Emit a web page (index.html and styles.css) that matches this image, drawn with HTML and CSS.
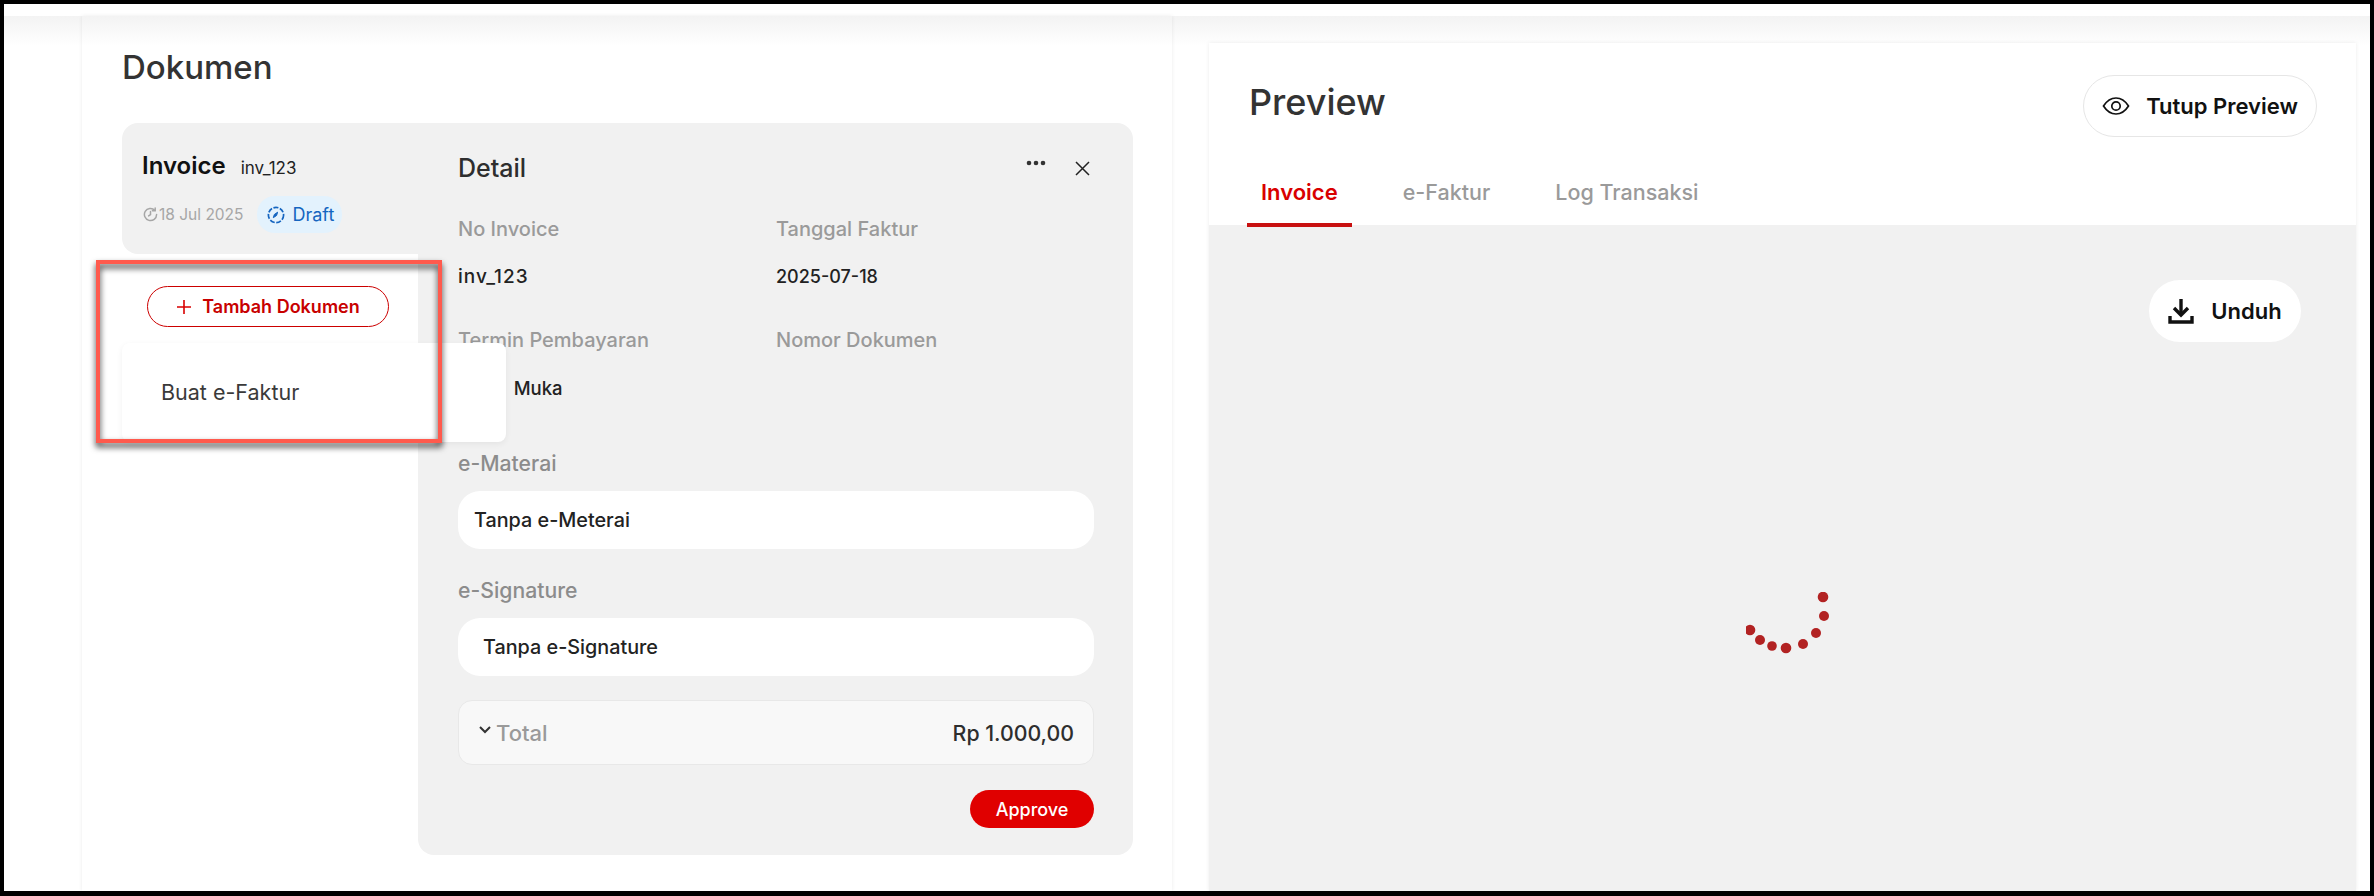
FILE: index.html
```html
<!DOCTYPE html>
<html>
    <head>
        <link rel="stylesheet" href="styles.css">
    </head>
<body>
<div class="page">
    <section class="doc-panel">
        <h1 class="panel-title">Dokumen</h1>
        <div class="doc-layout">
            <div class="sidebar">
                <div class="doc-card">
                    <div class="doc-card-top">
                        <span class="doc-name">Invoice</span>
                        <span class="doc-no">inv_123</span>
                    </div>
                    <div class="doc-card-meta">
                        <svg class="clock" width="15" height="15" viewBox="0 0 16 16" fill="none" stroke="#a6a6a6" stroke-width="1.6" stroke-linecap="round"><path d="M14.5 8A6.5 6.5 0 1 1 12.6 3.4"/><path d="M13 1v3h-3"/><path d="M8 4.8V8l-2 1.5"/></svg>
                        <span class="doc-date">18 Jul 2025</span>
                        <span class="status">
                            <svg width="18" height="18" viewBox="0 0 18 18" fill="none" stroke="#1565c0" stroke-width="1.7"><circle cx="9" cy="9" r="7.6" stroke-dasharray="5 1.6"/><path d="M6.3 11.7l1-3.2 3.3-2.3-1 3.3z" fill="#1565c0" stroke-width="1"/></svg>
                            Draft
                        </span>
                    </div>
                </div>
                <button class="add-doc">
                    <svg width="16" height="16" viewBox="0 0 16 16" stroke="#d90000" stroke-width="1.6"><path d="M8 1v14M1 8h14"/></svg>
                    Tambah Dokumen
                </button>
                <div class="add-menu">Buat e-Faktur</div>
                <div class="callout"></div>
            </div>
            <div class="detail">
                <div class="detail-head">
                    <h2 class="detail-title">Detail</h2>
                    <div class="detail-actions">
                        <svg class="more" width="20" height="6" viewBox="0 0 20 6" fill="#333"><circle cx="3" cy="3" r="2.3"/><circle cx="10" cy="3" r="2.3"/><circle cx="17" cy="3" r="2.3"/></svg>
                        <svg width="15" height="15" viewBox="0 0 15 15" stroke="#222" stroke-width="1.5"><path d="M1 1l13 13M14 1L1 14"/></svg>
                    </div>
                </div>
                <div class="fields">
                    <div>
                        <div class="label">No Invoice</div>
                        <div class="value value-no">inv_123</div>
                    </div>
                    <div>
                        <div class="label">Tanggal Faktur</div>
                        <div class="value">2025-07-18</div>
                    </div>
                    <div>
                        <div class="label">Termin Pembayaran</div>
                        <div class="value value-term">Uang Muka</div>
                    </div>
                    <div>
                        <div class="label">Nomor Dokumen</div>
                    </div>
                </div>
                <div class="label label-materai">e-Materai</div>
                <div class="select">Tanpa e-Meterai</div>
                <div class="label label-sign">e-Signature</div>
                <div class="select select-sign">Tanpa e-Signature</div>
                <div class="total">
                    <div class="total-name">
                        <svg width="12" height="8" viewBox="0 0 12 8" fill="none" stroke="#333" stroke-width="2"><path d="M1 1l5 5 5-5"/></svg>
                        <span>Total</span>
                    </div>
                    <span class="total-value">Rp 1.000,00</span>
                </div>
                <div class="detail-foot">
                    <button class="approve">Approve</button>
                </div>
            </div>
        </div>
    </section>
    <section class="preview-panel">
        <div class="preview-head">
            <h1 class="preview-title">Preview</h1>
            <button class="close-preview">
                <svg width="28" height="20" viewBox="0 0 28 20" fill="none" stroke="#111" stroke-width="1.7"><path d="M1.5 10C5 4.5 9 2 14 2s9 2.5 12.500 8C23 15.500 19 18 14 18S5 15.500 1.500 10z"/><circle cx="14" cy="10" r="4.200"/></svg>
                Tutup Preview
            </button>
        </div>
        <div class="tabs">
            <div class="tab active">Invoice</div>
            <div class="tab">e-Faktur</div>
            <div class="tab">Log Transaksi</div>
        </div>
        <div class="preview-body">
            <button class="download">
                <svg width="26" height="26" viewBox="0 0 26 26" fill="none" stroke="#111" stroke-width="3.4"><path d="M13 1v15"/><path d="M6 10l7 7 7-7"/><path d="M2 18v6h22v-6"/></svg>
                Unduh
            </button>
            <svg class="spinner" width="90" height="64" viewBox="1745 590 90 64" fill="#b22222">
                <circle cx="1822" cy="595" r="5.300"/>
                <circle cx="1823" cy="614" r="5"/>
                <circle cx="1815" cy="631" r="5"/>
                <circle cx="1802" cy="642" r="5"/>
                <circle cx="1785" cy="646" r="5.300"/>
                <circle cx="1771" cy="644" r="4.800"/>
                <circle cx="1759" cy="638" r="5"/>
                <circle cx="1749" cy="628" r="5.300"/>
            </svg>
        </div>
    </section>
</div>
</body>
</html>
```

FILE: styles.css
```css
:root {
    --red: #d90000;
    --panel-grey: #f1f1f1;
    --muted: #9a9a9a;
    --ink: #2e2e2e;
}

html, body {
    margin: 0;
    height: 100%;
}

body {
    box-sizing: border-box;
    height: 896px;
    border: 4px solid #000;
    border-bottom-width: 5px;
    background: #fff;
    color: var(--ink);
    font-family: 'Inter', sans-serif;
    overflow: hidden;
}

h1, h2 {
    margin: 0;
}

button {
    font-family: inherit;
    cursor: pointer;
}

.page {
    display: flex;
    height: 100%;
    padding-top: 12px;
    box-sizing: border-box;
    background: linear-gradient(#f3f3f3, #fff) no-repeat 0 12px / 100% 30px;
}

/* Left panel */
.doc-panel {
    width: 1090px;
    margin-left: 78px;
    padding-left: 40px;
    box-sizing: border-box;
    background: linear-gradient(#f3f3f3, #fff 30px);
    box-shadow: 0 0 4px rgba(0, 0, 0, 0.08);
}

.panel-title {
    margin-top: 31px;
    font-size: 33px;
    line-height: 40px;
    font-weight: 500;
    color: #333;
}

.doc-layout {
    display: flex;
    margin-top: 36px;
}

.sidebar {
    position: relative;
    width: 296px;
}

.doc-card {
    height: 131px;
    padding: 29px 0 0 20px;
    box-sizing: border-box;
    background: var(--panel-grey);
    border-radius: 16px 0 0 16px;
}

.doc-card-top {
    display: flex;
    align-items: baseline;
    gap: 15px;
}

.doc-name {
    font-size: 24px;
    line-height: 28px;
    font-weight: 600;
    color: #111;
}

.doc-no {
    font-size: 17px;
    color: #222;
}

.doc-card-meta {
    display: flex;
    align-items: center;
    margin-top: 16px;
    padding-left: 1px;
}

.clock {
    margin-right: 1px;
}

.doc-date {
    font-size: 15.500px;
    color: #a6a6a6;
}

.status {
    display: flex;
    align-items: center;
    gap: 8px;
    height: 37px;
    margin-left: 13px;
    padding: 0 8px 0 10px;
    background: #e3f2fd;
    border-radius: 18px;
    color: #1565c0;
    font-size: 18px;
}

.add-doc {
    display: flex;
    align-items: center;
    justify-content: center;
    gap: 10px;
    width: 242px;
    height: 41px;
    margin: 32px 0 0 25px;
    padding: 0;
    background: #fff;
    border: 1px solid #c00;
    border-radius: 21px;
    color: #c80000;
    font-size: 18px;
    font-weight: 600;
}

.add-menu {
    position: absolute;
    left: 0;
    top: 220px;
    z-index: 2;
    width: 384px;
    height: 99px;
    padding-left: 39px;
    box-sizing: border-box;
    background: #fff;
    border-radius: 8px;
    box-shadow: 0 2px 6px rgba(0, 0, 0, 0.06);
    font-size: 21.500px;
    line-height: 98px;
    color: #3a3a3a;
}

/* Red annotation drawn on the screenshot */
.callout {
    position: absolute;
    left: -26px;
    top: 137px;
    z-index: 3;
    width: 346px;
    height: 183px;
    box-sizing: border-box;
    border: 4px solid #ff5a4d;
    filter: drop-shadow(0 4px 3px rgba(0, 0, 0, 0.8));
}

/* Detail */
.detail {
    width: 715px;
    height: 732px;
    padding: 30px 39px 0 40px;
    box-sizing: border-box;
    background: var(--panel-grey);
    border-radius: 0 16px 16px 16px;
}

.detail-head {
    display: flex;
    justify-content: space-between;
    align-items: center;
    height: 30px;
}

.detail-title {
    font-size: 25px;
    font-weight: 500;
    color: #2e2e2e;
}

.detail-actions {
    display: flex;
    align-items: center;
    gap: 29px;
    margin-right: 4px;
}

.more {
    margin-top: -10px;
}

.fields {
    display: grid;
    grid-template-columns: 318px 1fr;
    row-gap: 39px;
    margin-top: 34px;
}

.label {
    font-size: 20px;
    line-height: 24px;
    font-weight: 500;
    color: var(--muted);
}

.value {
    margin-top: 24px;
    font-size: 18px;
    line-height: 24px;
    font-weight: 500;
    color: #222;
}

.value-no {
    font-size: 19px;
    letter-spacing: 1px;
}

.value-term {
    font-size: 18.500px;
    word-spacing: 4px;
}

.label-materai {
    margin-top: 51px;
    font-size: 21.200px;
    color: #8c8c8c;
}

.label-sign {
    margin-top: 29px;
    font-size: 21.200px;
    color: #8c8c8c;
}

.select {
    height: 58px;
    margin-top: 16px;
    padding-left: 16px;
    background: #fff;
    border-radius: 22px;
    font-size: 19.800px;
    line-height: 58px;
    font-weight: 500;
    color: #222;
}

.select-sign {
    padding-left: 25px;
}

.total {
    display: flex;
    justify-content: space-between;
    align-items: center;
    height: 65px;
    margin-top: 24px;
    padding: 0 19px 0 20px;
    box-sizing: border-box;
    background: #f8f8f8;
    border: 1px solid #e8e8e8;
    border-radius: 14px;
}

.total-name {
    display: flex;
    align-items: center;
    gap: 5px;
    font-size: 22px;
    font-weight: 500;
    color: var(--muted);
}

.total-name svg {
    margin-top: -6px;
}

.total-value {
    font-size: 21.300px;
    font-weight: 500;
    color: #2e2e2e;
}

.detail-foot {
    display: flex;
    justify-content: flex-end;
    margin-top: 25px;
}

.approve {
    width: 124px;
    height: 38px;
    padding: 0;
    background: #e00000;
    border: 0;
    border-radius: 19px;
    color: #fff;
    font-size: 18px;
    font-weight: 500;
}

/* Right panel */
.preview-panel {
    display: flex;
    flex-direction: column;
    width: 1147px;
    margin: 27px 0 0 37px;
    background: #fff;
    box-shadow: 0 0 4px rgba(0, 0, 0, 0.08);
}

.preview-head {
    display: flex;
    justify-content: space-between;
    padding: 32px 39px 0 40px;
}

.preview-title {
    height: 50px;
    padding-top: 2px;
    font-size: 36px;
    line-height: 50px;
    font-weight: 500;
    color: #333;
}

.close-preview {
    display: flex;
    align-items: center;
    justify-content: center;
    gap: 16px;
    width: 234px;
    height: 62px;
    padding: 0;
    background: #fff;
    border: 1px solid #e6e6e6;
    border-radius: 31px;
    color: #111;
    font-size: 22px;
    font-weight: 600;
}

.tabs {
    display: flex;
    gap: 37px;
    margin: 43px 0 -2px 38px;
    position: relative;
}

.tab {
    padding: 0 14px 19px;
    font-size: 21.500px;
    line-height: 24px;
    font-weight: 500;
    color: var(--muted);
    border-bottom: 4px solid transparent;
}

.tab.active {
    color: var(--red);
    font-weight: 600;
    font-size: 22px;
    border-bottom-color: #c81010;
}

.preview-body {
    flex: 1;
    display: flex;
    flex-direction: column;
    padding: 55px 55px 0 0;
    background: var(--panel-grey);
}

.download {
    align-self: flex-end;
    display: flex;
    align-items: center;
    justify-content: center;
    gap: 17px;
    width: 152px;
    height: 62px;
    padding: 0;
    background: #fff;
    border: 0;
    border-radius: 31px;
    color: #111;
    font-size: 22px;
    font-weight: 600;
}

.spinner {
    margin: 250px 0 0 537px;
}
```
